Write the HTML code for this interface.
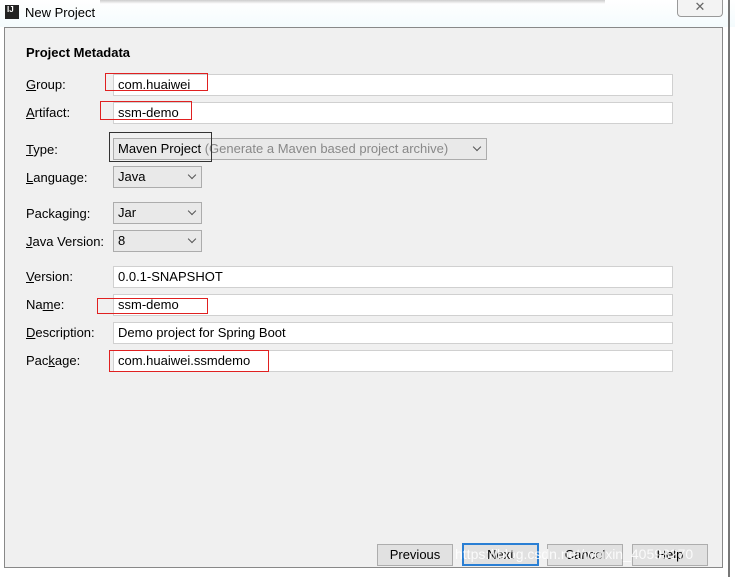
<!DOCTYPE html>
<html><head><style>
body{margin:0;width:735px;height:577px;background:#fff;position:relative;overflow:hidden;font-family:"Liberation Sans","Noto Sans CJK SC",sans-serif;font-size:13px;color:#000}
.abs{position:absolute}
.lbl{position:absolute;left:26px}
.f{position:absolute;left:113px;height:20px;border:1px solid #d0d0d0;background:#fff;line-height:20px;padding-left:4px;box-sizing:content-box}
.c{position:absolute;left:113px;height:20px;border:1px solid #acacac;background:#e9e9e9;line-height:20px;padding-left:4px}
.c:after{content:"";position:absolute;right:6px;top:5px;width:5px;height:5px;border-right:1px solid #555;border-bottom:1px solid #555;transform:rotate(45deg)}
.r{position:absolute;border:1px solid #e02020}
.b{position:absolute;top:544px;width:74px;height:20px;border:1px solid #adadad;background:#e1e1e1;text-align:center;line-height:20px}
</style></head><body>
<div class="abs" style="left:0;top:0;width:735px;height:27px;background:linear-gradient(#fff,#f4fbfd)"></div>
<div class="abs" style="left:5px;top:5px;width:14px;height:14px;background:#222;color:#fff;font-size:8px;font-weight:bold;line-height:10px;padding-left:2px;box-sizing:border-box">IJ</div>
<div class="abs" style="left:25px;top:5px;font-size:13px">New Project</div>
<div class="abs" style="left:100px;top:0;width:505px;height:4px;background:linear-gradient(#ccc,#fff)"></div>
<div class="abs" style="left:677px;top:0;width:44px;height:16px;border:1px solid #999;border-top:none;border-radius:0 0 4px 4px;background:#f3f3f3;text-align:center;font-size:13px;line-height:14px;color:#666">✕</div>
<div class="abs" style="left:728px;top:0;width:2px;height:577px;background:#777"></div>
<div class="abs" style="left:4px;top:27px;width:717px;height:539px;border:1px solid #888;background:#f0f0f0"></div>
<div class="abs" style="left:26px;top:45px;font-weight:bold">Project Metadata</div>

<div class="lbl" style="top:77px"><u>G</u>roup:</div><div class="f" style="top:74px;width:554px">com.huaiwei</div>
<div class="lbl" style="top:105px"><u>A</u>rtifact:</div><div class="f" style="top:102px;width:554px">ssm-demo</div>
<div class="lbl" style="top:142px"><u>T</u>ype:</div><div class="c" style="top:138px;width:368px">Maven Project <span style="color:#888">(Generate a Maven based project archive)</span></div>
<div class="lbl" style="top:170px"><u>L</u>anguage:</div><div class="c" style="top:166px;width:83px">Java</div>
<div class="lbl" style="top:206px">Packa<u>g</u>ing:</div><div class="c" style="top:202px;width:83px">Jar</div>
<div class="lbl" style="top:234px"><u>J</u>ava Version:</div><div class="c" style="top:230px;width:83px">8</div>
<div class="lbl" style="top:269px"><u>V</u>ersion:</div><div class="f" style="top:266px;width:554px">0.0.1-SNAPSHOT</div>
<div class="lbl" style="top:297px">Na<u>m</u>e:</div><div class="f" style="top:294px;width:554px">ssm-demo</div>
<div class="lbl" style="top:325px"><u>D</u>escription:</div><div class="f" style="top:322px;width:554px">Demo project for Spring Boot</div>
<div class="lbl" style="top:353px">Pac<u>k</u>age:</div><div class="f" style="top:350px;width:554px">com.huaiwei.ssmdemo</div>

<div class="r" style="left:105px;top:73px;width:101px;height:16px"></div>
<div class="r" style="left:100px;top:101px;width:90px;height:17px"></div>
<div class="abs" style="left:109px;top:132px;width:101px;height:28px;border:1px solid #333"></div>
<div class="r" style="left:97px;top:298px;width:109px;height:14px"></div>
<div class="r" style="left:109px;top:350px;width:158px;height:20px"></div>

<div class="b" style="left:377px">Previous</div>
<div class="b" style="left:462px;border:2px solid #2a7fd4;width:73px;height:19px;top:543px">Next</div>
<div class="b" style="left:547px">Cancel</div>
<div class="b" style="left:632px">Help</div>
<div class="abs" style="left:455px;top:546px;font-size:14px;color:rgba(255,255,255,0.85)">https://blog.csdn.net/weixin_40598270</div>
</body></html>
